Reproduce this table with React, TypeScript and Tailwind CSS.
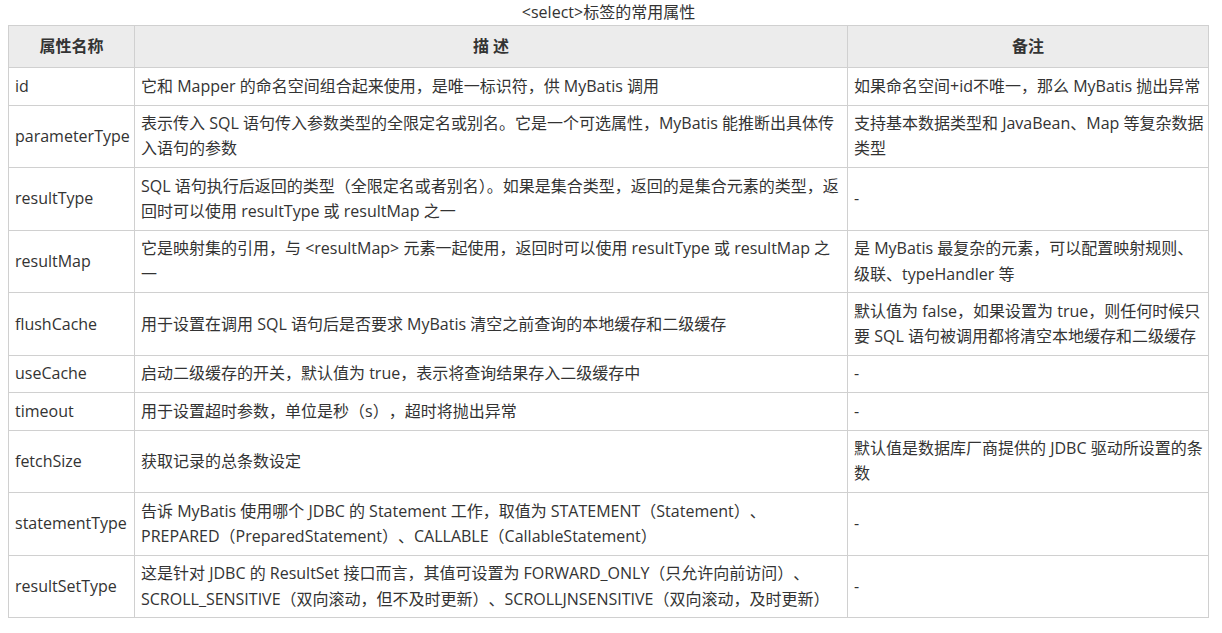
import React from 'react'

type Row = {
  name: string
  desc: string[]
  note: string[]
  tight?: boolean
}

const rows: Row[] = [
  {
    name: 'id',
    desc: ['它和 Mapper 的命名空间组合起来使用，是唯一标识符，供 MyBatis 调用'],
    note: ['如果命名空间+id不唯一，那么 MyBatis 抛出异常'],
  },
  {
    name: 'parameterType',
    desc: [
      '表示传入 SQL 语句传入参数类型的全限定名或别名。它是一个可选属性，MyBatis 能推断出具体传',
      '入语句的参数',
    ],
    note: ['支持基本数据类型和 JavaBean、Map 等复杂数据', '类型'],
  },
  {
    name: 'resultType',
    desc: [
      'SQL 语句执行后返回的类型（全限定名或者别名）。如果是集合类型，返回的是集合元素的类型，返',
      '回时可以使用 resultType 或 resultMap 之一',
    ],
    note: ['-'],
    tight: true,
  },
  {
    name: 'resultMap',
    desc: [
      '它是映射集的引用，与 <resultMap> 元素一起使用，返回时可以使用 resultType 或 resultMap 之',
      '一',
    ],
    note: ['是 MyBatis 最复杂的元素，可以配置映射规则、', '级联、typeHandler 等'],
  },
  {
    name: 'flushCache',
    desc: ['用于设置在调用 SQL 语句后是否要求 MyBatis 清空之前查询的本地缓存和二级缓存'],
    note: ['默认值为 false，如果设置为 true，则任何时候只', '要 SQL 语句被调用都将清空本地缓存和二级缓存'],
  },
  {
    name: 'useCache',
    desc: ['启动二级缓存的开关，默认值为 true，表示将查询结果存入二级缓存中'],
    note: ['-'],
  },
  {
    name: 'timeout',
    desc: ['用于设置超时参数，单位是秒（s），超时将抛出异常'],
    note: ['-'],
  },
  {
    name: 'fetchSize',
    desc: ['获取记录的总条数设定'],
    note: ['默认值是数据库厂商提供的 JDBC 驱动所设置的条', '数'],
  },
  {
    name: 'statementType',
    desc: [
      '告诉 MyBatis 使用哪个 JDBC 的 Statement 工作，取值为 STATEMENT（Statement）、',
      'PREPARED（PreparedStatement）、CALLABLE（CallableStatement）',
    ],
    note: ['-'],
  },
  {
    name: 'resultSetType',
    desc: [
      '这是针对 JDBC 的 ResultSet 接口而言，其值可设置为 FORWARD_ONLY（只允许向前访问）、',
      'SCROLL_SENSITIVE（双向滚动，但不及时更新）、SCROLLJNSENSITIVE（双向滚动，及时更新）',
    ],
    note: ['-'],
  },
]

// keep the original line breaks so the wrapping matches
const Lines = ({ lines, tight }: { lines: string[]; tight?: boolean }) => (
  <div className={tight ? '[text-spacing-trim:normal]' : ''}>
    {lines.map((l, i) => (
      <div key={i} className="whitespace-nowrap">
        {l}
      </div>
    ))}
  </div>
)

const App = () => {
  return (
    <div
      className="bg-white text-[#333] text-[16px] leading-[25.3px] pl-2 pt-0 [text-spacing-trim:space-all]"
      style={{ fontFamily: '"Open Sans", "Noto Sans CJK SC", sans-serif' }}
    >
      <table className="w-[1200px] table-fixed border-collapse">
        <caption className="h-[25px] text-center leading-[25px]">&lt;select&gt;标签的常用属性</caption>
        <colgroup>
          <col className="w-[126px]" />
          <col className="w-[713px]" />
          <col className="w-[361px]" />
        </colgroup>
        <thead>
          <tr className="bg-[#ececec]">
            <th className="border border-[#d0d0d0] py-2 font-bold text-center">属性名称</th>
            <th className="border border-[#d0d0d0] py-2 font-bold text-center">描 述</th>
            <th className="border border-[#d0d0d0] py-2 font-bold text-center">备注</th>
          </tr>
        </thead>
        <tbody>
          {rows.map((r) => (
            <tr key={r.name}>
              <td className="border border-[#d0d0d0] px-[6px] py-[5.5px] align-middle">{r.name}</td>
              <td className="border border-[#d0d0d0] px-[6px] py-[5.5px] align-middle">
                <Lines lines={r.desc} tight={r.tight} />
              </td>
              <td className="border border-[#d0d0d0] px-[6px] py-[5.5px] align-middle">
                <Lines lines={r.note} />
              </td>
            </tr>
          ))}
        </tbody>
      </table>
    </div>
  )
}

export default App
